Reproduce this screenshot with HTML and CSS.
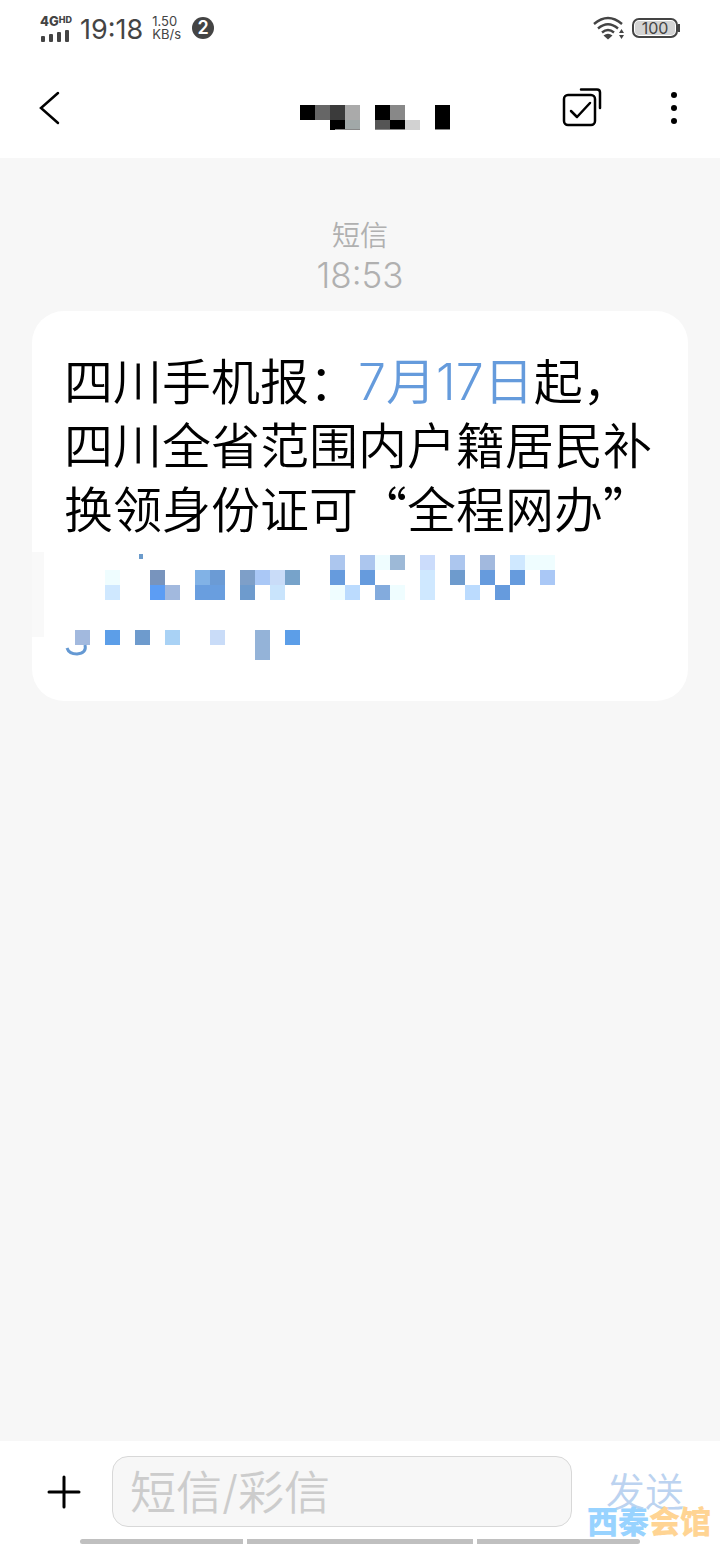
FILE: index.html
```html
<!DOCTYPE html>
<html lang="zh-CN">
<head>
<meta charset="utf-8">
<meta name="viewport" content="width=device-width, initial-scale=1">
<title>短信</title>
<link rel="stylesheet" href="styles.css">
</head>
<body>
<div class="screen">
  <div class="status">
    <div class="signal">
      <span class="network">4G<span class="hd">HD</span></span>
      <svg width="30" height="12" viewBox="0 0 30 12" fill="#444" aria-hidden="true">
        <rect x="1" y="6" width="4" height="6" rx="1"/><rect x="9" y="4" width="4" height="8" rx="1"/><rect x="17" y="2" width="4" height="10" rx="1"/><rect x="25" y="0" width="4" height="12" rx="1"/>
      </svg>
    </div>
    <span class="clock">19:18</span>
    <span class="speed">1.50<br>KB/s</span>
    <span class="count">2</span>
    <span class="spacer"></span>
    <svg class="wifi" width="32" height="24" viewBox="0 0 32 24" fill="none" stroke="#444" stroke-width="2.4" aria-hidden="true">
      <path d="M1 8Q15-4 29 8M5 12.500Q15 4 25 12.500M9 16.500Q15 11.500 21 16.500"/>
      <path d="M10.500 19.500Q15 16 19.500 19.500L15 23.500Z" fill="#444" stroke="none"/>
      <path d="M28.500 13l2.500 4h-5zM28.500 23l2.500-4h-5z" fill="#444" stroke="none"/>
    </svg>
    <span class="battery">100</span>
  </div>

  <header class="bar">
    <button class="icon" aria-label="返回">
      <svg width="24" height="36" viewBox="0 0 24 36" fill="none" stroke="#000" stroke-width="2.500" stroke-linecap="round"><path d="M20 3L3 18L20 33"/></svg>
    </button>
    <svg class="contact" width="150" height="25" viewBox="0 0 150 25" shape-rendering="crispEdges" aria-hidden="true">
      <path fill="#000" d="M0 0h15v15H0zM30 15h15v10H30zM75 0h15v15H75zM90 15h15v10H90zM135 0h15v25h-15z"/>
      <path fill="#666" d="M15 0h15v15H15z"/><path fill="#3b3b3b" d="M30 0h15v15H30z"/>
      <path fill="#aaa" d="M45 0h15v15H45z"/><path fill="#a1a8a8" d="M45 15h15v10H45z"/>
      <path fill="#888" d="M90 0h15v15H90z"/><path fill="#555" d="M75 15h15v10H75z"/><path fill="#d2d2d2" d="M105 15h15v10h-15z"/>
      <path fill="#888" d="M35 24h25v1H35zM75 24h30v1H75zM135 24h15v1h-15z"/>
    </svg>
    <div class="actions">
      <button class="icon" aria-label="选择">
        <svg width="40" height="40" viewBox="0 0 40 40" fill="none" stroke="#000" stroke-width="2.500" stroke-linecap="round" stroke-linejoin="round">
          <rect x="2" y="7" width="31" height="30" rx="4"/><path d="M9 23l6 6 13-14"/><path d="M19 1.500h16q3 0 3 3V20"/>
        </svg>
      </button>
      <button class="icon" aria-label="更多">
        <svg width="12" height="36" viewBox="0 0 12 36"><circle cx="6" cy="5" r="3"/><circle cx="6" cy="18" r="3"/><circle cx="6" cy="31" r="3"/></svg>
      </button>
    </div>
  </header>

  <main class="thread">
    <div class="stamp"><span class="kind">短信</span><time class="time">18:53</time></div>
    <article class="bubble">
      <p class="text">四川手机报：<a class="date" href="#">7月17日</a>起，四川全省范围内户籍居民补换领身份证可“全程网办”</p>
      <svg class="mosaic" height="160" viewBox="32 541 656 160" preserveAspectRatio="xMinYMin meet" aria-hidden="true">
        <path fill="#f9f9f9" d="M32 552h12v85H32z"/>
        <g shape-rendering="crispEdges">
          <path fill="#6b9bcb" d="M139 554h4v5h-4z"/>
          <path fill="#effdff" d="M105 570h15v15h-15zM390 555h-15v15h15zM540 555h15v15h-15zM525 555h15v15h-15zM330 585h15v15h-15zM390 585h15v15h-15z"/>
          <path fill="#cfe8ff" d="M105 585h15v15h-15zM510 555h15v15h-15zM420 570h15v30h-15z"/>
          <path fill="#7894bd" d="M150 570h15v15h-15z"/><path fill="#5c9df4" d="M150 585h15v15h-15z"/>
          <path fill="#a2b9de" d="M165 585h15v15h-15zM75 630h15v15H75zM480 555h15v15h-15z"/>
          <path fill="#81b2e6" d="M195 570h15v15h-15z"/><path fill="#6b9bd5" d="M210 570h15v15h-15z"/><path fill="#699edf" d="M195 585h30v15h-30z"/>
          <path fill="#7e9fc8" d="M240 570h15v15h-15z"/><path fill="#6e9bcd" d="M240 585h15v15h-15zM135 630h15v15h-15zM450 570h15v15h-15z"/>
          <path fill="#aac8f6" d="M255 570h15v15h-15zM540 570h15v15h-15z"/>
          <path fill="#acc6ee" d="M330 555h15v15h-15zM360 555h15v15h-15zM450 555h15v15h-15z"/>
          <path fill="#c9dcf8" d="M270 570h15v15h-15zM210 630h15v15h-15z"/><path fill="#c9e4fc" d="M270 585h15v15h-15z"/>
          <path fill="#77a3ca" d="M285 570h15v15h-15z"/><path fill="#9db9d7" d="M390 555h15v15h-15z"/>
          <path fill="#669bdd" d="M330 570h15v15h-15zM360 570h15v15h-15zM480 570h15v15h-15zM510 570h15v15h-15zM495 585h15v15h-15z"/>
          <path fill="#bbdbfe" d="M345 585h15v15h-15zM465 585h15v15h-15z"/><path fill="#83abdd" d="M375 585h15v15h-15z"/>
          <path fill="#cbdcfb" d="M420 555h15v15h-15z"/>
          <path fill="#5c9ee8" d="M105 630h15v15h-15zM285 630h15v15h-15z"/><path fill="#a9d2f5" d="M165 630h15v15h-15z"/>
          <path fill="#94b3d8" d="M255 630h15v30h-15z"/>
        </g>
        <path d="M67 648Q69 654 77 654Q87 653 85 645" fill="none" stroke="#6599d3" stroke-width="3"/>
      </svg>
    </article>
  </main>

  <footer class="composer">
    <div class="row">
      <button class="icon plus" aria-label="添加">
        <svg width="34" height="34" viewBox="0 0 34 34" stroke="#000" stroke-width="3" stroke-linecap="round"><path d="M2 17h30M17 2v30"/></svg>
      </button>
      <input class="field" type="text" placeholder="短信/彩信" aria-label="短信/彩信">
      <button class="send">发送</button>
    </div>
    <div class="nav"><span class="pill left"></span><span class="pill middle"></span><span class="pill right"></span></div>
    <div class="mark">西秦<span class="warm">会馆</span></div>
  </footer>
</div>
</body>
</html>
```
FILE: styles.css
```css
* { box-sizing: border-box; }
body { margin: 0; background: #f7f7f7; color: #000; font-family: Inter, "Noto Sans CJK SC", sans-serif; font-weight: 350; }
button { padding: 0; border: 0; background: none; font: inherit; }
svg { display: block; }
.screen { display: flex; flex-direction: column; min-height: 100vh; }
.status { display: flex; align-items: center; height: 56px; padding: 0 42px 0 40px; background: #fff; color: #444; }
.signal { display: flex; flex-direction: column; gap: 3px; width: 32px; margin-right: 8px; }
.network { display: flex; font-size: 13px; line-height: 12px; font-weight: 800; }
.hd { font-size: 9px; line-height: 9px; }
.clock { font-size: 27px; line-height: 32px; font-weight: 400; padding-top: 4px; }
.speed { margin-left: 9px; font-size: 13px; line-height: 13px; font-weight: 400; }
.count { margin-left: 11px; width: 22px; height: 22px; border-radius: 50%; background: #444; color: #fff; font-size: 18px; line-height: 22px; font-weight: 600; text-align: center; }
.spacer { flex: 1; }
.wifi { margin-right: 7px; }
.battery { position: relative; width: 46px; height: 20px; border: 2px solid #444; border-radius: 7px; background: #d4d4d4; box-shadow: inset 0 0 0 1px #fff; font-size: 16px; line-height: 16px; font-weight: 400; text-align: center; }
.battery::after { content: ""; position: absolute; right: -4px; top: 4px; width: 2px; height: 8px; background: #444; }
.bar { display: grid; grid-template-columns: 1fr auto 1fr; align-items: center; height: 102px; padding: 2px 40px 0 38px; background: #fff; }
.icon { display: grid; place-items: center; justify-self: start; }
.contact { margin: 18px 0 0 32px; }
.actions { display: flex; align-items: center; justify-content: flex-end; gap: 66px; }
.thread { flex: 1; padding: 58px 32px; }
.stamp { display: flex; flex-direction: column; align-items: center; color: #b0b0b0; margin-bottom: 17px; }
.kind { font-size: 28px; line-height: 40px; }
.time { font-size: 35px; line-height: 38px; font-weight: 300; }
.bubble { border-radius: 32px; background: #fff; padding-top: 36px; overflow: hidden; }
.text { margin: 0; padding: 0 32px 2px; font-family: "Noto Sans CJK SC", sans-serif; font-size: 49px; line-height: 64px; }
.date { color: #659bdc; text-decoration: none; font-family: Inter, "Noto Sans CJK SC", sans-serif; font-size: 50px; line-height: 1; font-weight: 350; }
.mosaic { width: 100%; }
.composer { position: relative; background: #fff; padding-top: 15px; }
.row { display: flex; align-items: center; padding: 0 36px 0 47px; }
.field { flex: 1; min-width: 0; height: 71px; margin-left: 31px; margin-right: 34px; padding: 0 17px; border: 1px solid #d8d8d8; border-radius: 16px; background: #f7f7f7; font: inherit; font-size: 46px; }
.field::placeholder { color: #ccc; opacity: 1; }
.send { color: #bcd3f0; font-size: 39px; line-height: 48px; }
.nav { display: flex; gap: 4px; padding: 12px 80px 0; }
.pill { height: 5px; background: #c0c0c0; flex: 163; }
.middle { flex: 226; }
.left { border-radius: 4px 0 0 4px; }
.right { border-radius: 0 4px 4px 0; }
.mark { position: absolute; right: 9px; bottom: 5px; color: #98d3ff; font-size: 31px; line-height: 34px; font-weight: 900; }
.warm { color: #ffd493; }
```
